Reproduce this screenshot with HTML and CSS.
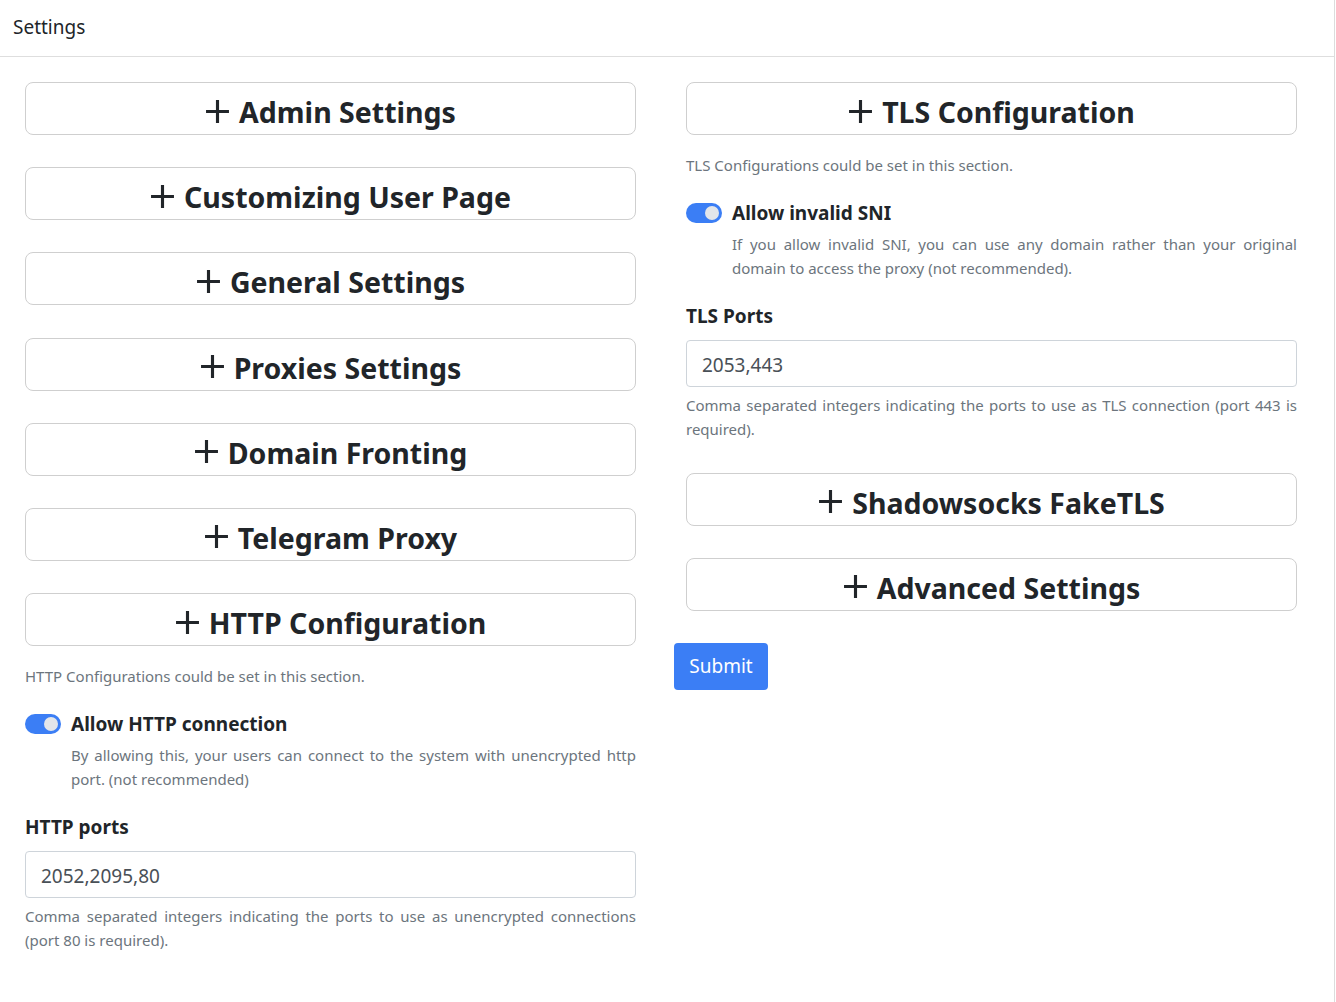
FILE: index.html
```html
<!DOCTYPE html>
<html>
<head>
<meta charset="utf-8">
<link rel="stylesheet" href="styles.css">
</head>
<body>
<div class="card">
  <div class="card-header">Settings</div>
  <div class="card-body">
    <div class="col">
      <button class="acc"><svg class="plus" viewBox="0 0 24 24"><path d="M12 1v22M1 12h22"/></svg>Admin Settings</button>
      <button class="acc"><svg class="plus" viewBox="0 0 24 24"><path d="M12 1v22M1 12h22"/></svg>Customizing User Page</button>
      <button class="acc"><svg class="plus" viewBox="0 0 24 24"><path d="M12 1v22M1 12h22"/></svg>General Settings</button>
      <button class="acc"><svg class="plus" viewBox="0 0 24 24"><path d="M12 1v22M1 12h22"/></svg>Proxies Settings</button>
      <button class="acc"><svg class="plus" viewBox="0 0 24 24"><path d="M12 1v22M1 12h22"/></svg>Domain Fronting</button>
      <button class="acc"><svg class="plus" viewBox="0 0 24 24"><path d="M12 1v22M1 12h22"/></svg>Telegram Proxy</button>
      <button class="acc acc-open"><svg class="plus" viewBox="0 0 24 24"><path d="M12 1v22M1 12h22"/></svg>HTTP Configuration</button>
      <div class="section">
        <p class="muted">HTTP Configurations could be set in this section.</p>
        <div class="switch-row">
          <span class="switch"><span class="knob"></span></span>
          <div>
            <div class="switch-label">Allow HTTP connection</div>
            <p class="muted justify">By allowing this, your users can connect to the system with unencrypted http port. (not recommended)</p>
          </div>
        </div>
        <div class="field">
          <div class="field-label">HTTP ports</div>
          <input class="input" type="text" value="2052,2095,80">
          <p class="muted justify">Comma separated integers indicating the ports to use as unencrypted connections (port 80 is required).</p>
        </div>
      </div>
    </div>
    <div class="col">
      <button class="acc acc-open"><svg class="plus" viewBox="0 0 24 24"><path d="M12 1v22M1 12h22"/></svg>TLS Configuration</button>
      <div class="section">
        <p class="muted">TLS Configurations could be set in this section.</p>
        <div class="switch-row">
          <span class="switch"><span class="knob"></span></span>
          <div>
            <div class="switch-label">Allow invalid SNI</div>
            <p class="muted justify">If you allow invalid SNI, you can use any domain rather than your original domain to access the proxy (not recommended).</p>
          </div>
        </div>
        <div class="field">
          <div class="field-label">TLS Ports</div>
          <input class="input" type="text" value="2053,443">
          <p class="muted justify">Comma separated integers indicating the ports to use as TLS connection (port 443 is required).</p>
        </div>
      </div>
      <button class="acc"><svg class="plus" viewBox="0 0 24 24"><path d="M12 1v22M1 12h22"/></svg>Shadowsocks FakeTLS</button>
      <button class="acc"><svg class="plus" viewBox="0 0 24 24"><path d="M12 1v22M1 12h22"/></svg>Advanced Settings</button>
      <button class="submit">Submit</button>
    </div>
  </div>
</div>
</body>
</html>
```
FILE: styles.css
```css
* { box-sizing: border-box; }
html, body { margin: 0; padding: 0; background: #fff; }
body {
  font-family: "Noto Sans", "Open Sans", sans-serif;
  color: #212529;
}
.card {
  width: 1335px;
  min-height: 1002px;
  border-right: 1px solid #dcdcdc;
}
.card-header {
  height: 57px;
  padding: 0 13px 2px;
  display: flex;
  align-items: center;
  border-bottom: 1px solid #dedede;
  font-size: 19px;
}
.card-body {
  display: flex;
  gap: 50px;
  padding: 25px 25px;
}
.col {
  width: 611px;
  display: flex;
  flex-direction: column;
  align-items: stretch;
}
.acc {
  height: 53px;
  border: 1px solid #cfcfcf;
  border-radius: 8px;
  background: #fff;
  display: flex;
  align-items: center;
  justify-content: center;
  gap: 9px;
  font-family: inherit;
  font-weight: 700;
  font-size: 28.5px;
  color: #212529;
  margin: 0 0 32.2px 0;
  padding: 7px 0 0 0;
}
.acc-open { margin-bottom: 0; }
.plus {
  width: 25px;
  height: 25px;
  stroke: #212529;
  stroke-width: 3;
  fill: none;
  margin-top: -2px;
}
.section {
  padding-top: 17.5px;
  padding-bottom: 32px;
}
.muted {
  color: #6c757d;
  font-size: 15px;
  line-height: 24px;
  margin: 0;
}
.justify { text-align: justify; }
.switch-row {
  display: flex;
  gap: 10px;
  margin-top: 24px;
}
.switch {
  flex: none;
  width: 36px;
  height: 20px;
  border-radius: 10px;
  background: #3b7ef5;
  position: relative;
  margin-top: 2px;
}
.knob {
  position: absolute;
  right: 3px;
  top: 3px;
  width: 14px;
  height: 14px;
  border-radius: 50%;
  background: #e3e6ea;
}
.switch-label {
  font-weight: 700;
  font-size: 19px;
  line-height: 24px;
  margin-bottom: 7px;
}
.field { margin-top: 24px; }
.field-label {
  font-weight: 700;
  font-size: 19px;
  line-height: 24px;
  margin-bottom: 12px;
}
.input {
  display: block;
  width: 100%;
  height: 47px;
  border: 1px solid #ced4da;
  border-radius: 4px;
  padding: 3px 15px 0;
  font-family: inherit;
  font-size: 19px;
  color: #495057;
  margin-bottom: 6px;
}
.submit {
  align-self: flex-start;
  margin-left: -12px;
  height: 47px;
  width: 94px;
  border: none;
  border-radius: 4px;
  background: #3b7ef5;
  color: #fff;
  font-family: inherit;
  font-size: 19px;
  padding: 0;
}
```
